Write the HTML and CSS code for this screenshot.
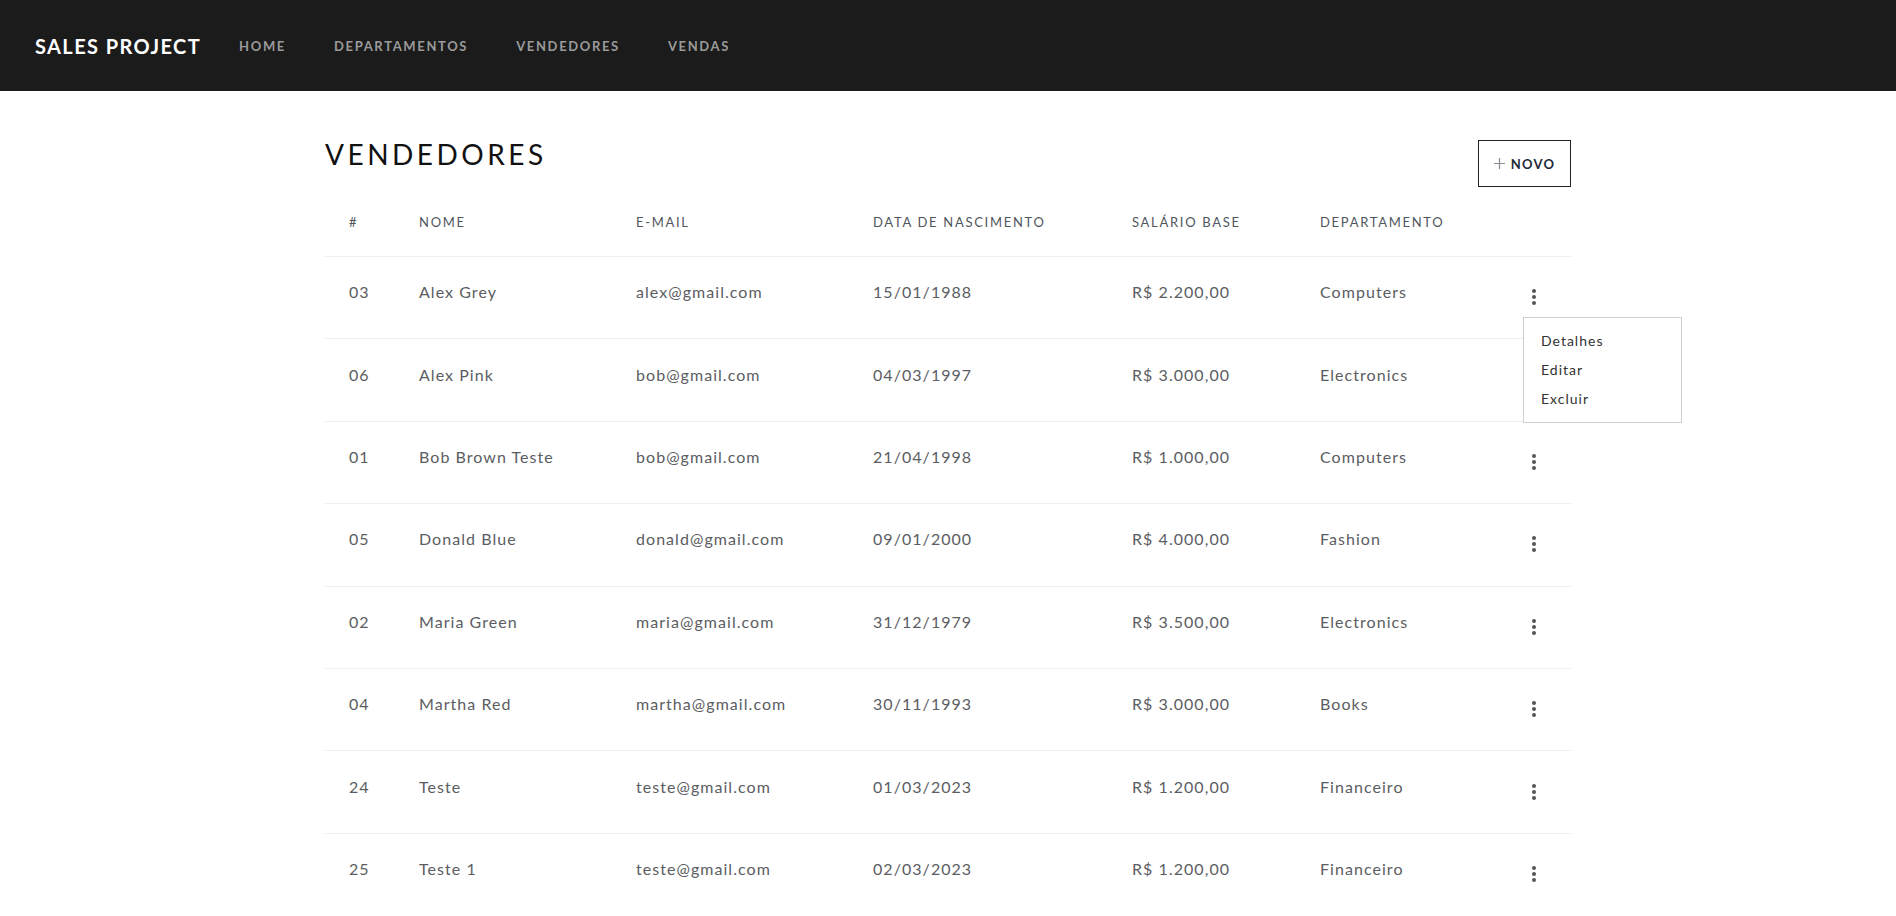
FILE: index.html
```html
<!DOCTYPE html>
<html lang="pt">
<head>
<meta charset="utf-8">
<title>Vendedores</title>
<link rel="stylesheet" href="styles.css">
</head>
<body>
<nav class="navbar">
  <span class="brand">SALES PROJECT</span>
  <a class="nav-link" href="#">HOME</a>
  <a class="nav-link" href="#">DEPARTAMENTOS</a>
  <a class="nav-link" href="#">VENDEDORES</a>
  <a class="nav-link" href="#">VENDAS</a>
</nav>
<main class="container">
  <div class="title-row">
    <h1 class="title">VENDEDORES</h1>
    <button class="btn-novo"><svg class="plus" width="11" height="11" viewBox="0 0 11 11"><path d="M5.5 0V11M0 5.5H11" stroke="#8a8a90" stroke-width="1.2" fill="none"/></svg><span>NOVO</span></button>
  </div>
  <table class="table">
    <colgroup>
      <col class="w1"><col class="w2"><col class="w3"><col class="w4"><col class="w5"><col class="w6"><col class="w7">
    </colgroup>
    <thead>
      <tr><th>#</th><th>NOME</th><th>E-MAIL</th><th>DATA DE NASCIMENTO</th><th>SALÁRIO BASE</th><th>DEPARTAMENTO</th><th></th></tr>
    </thead>
    <tbody>
      <tr><td>03</td><td>Alex Grey</td><td>alex@gmail.com</td><td>15/01/1988</td><td>R$ 2.200,00</td><td>Computers</td>
        <td class="act"><span class="dots"><i></i><i></i><i></i></span>
          <div class="menu"><a href="#">Detalhes</a><a href="#">Editar</a><a href="#">Excluir</a></div></td></tr>
      <tr><td>06</td><td>Alex Pink</td><td>bob@gmail.com</td><td>04/03/1997</td><td>R$ 3.000,00</td><td>Electronics</td><td class="act"></td></tr>
      <tr><td>01</td><td>Bob Brown Teste</td><td>bob@gmail.com</td><td>21/04/1998</td><td>R$ 1.000,00</td><td>Computers</td><td class="act"><span class="dots"><i></i><i></i><i></i></span></td></tr>
      <tr><td>05</td><td>Donald Blue</td><td>donald@gmail.com</td><td>09/01/2000</td><td>R$ 4.000,00</td><td>Fashion</td><td class="act"><span class="dots"><i></i><i></i><i></i></span></td></tr>
      <tr><td>02</td><td>Maria Green</td><td>maria@gmail.com</td><td>31/12/1979</td><td>R$ 3.500,00</td><td>Electronics</td><td class="act"><span class="dots"><i></i><i></i><i></i></span></td></tr>
      <tr><td>04</td><td>Martha Red</td><td>martha@gmail.com</td><td>30/11/1993</td><td>R$ 3.000,00</td><td>Books</td><td class="act"><span class="dots"><i></i><i></i><i></i></span></td></tr>
      <tr><td>24</td><td>Teste</td><td>teste@gmail.com</td><td>01/03/2023</td><td>R$ 1.200,00</td><td>Financeiro</td><td class="act"><span class="dots"><i></i><i></i><i></i></span></td></tr>
      <tr class="last"><td>25</td><td>Teste 1</td><td>teste@gmail.com</td><td>02/03/2023</td><td>R$ 1.200,00</td><td>Financeiro</td><td class="act"><span class="dots"><i></i><i></i><i></i></span></td></tr>
    </tbody>
  </table>
</main>
</body>
</html>
```
FILE: styles.css
```css
html, body {
  margin: 0;
  padding: 0;
  background: #fff;
  font-family: Lato, "Open Sans", Arial, sans-serif;
  overflow: hidden;
}
.navbar {
  height: 91px;
  background: #1b1b1b;
  display: flex;
  align-items: center;
  padding: 0 35px;
  box-sizing: border-box;
}
.brand {
  color: #fff;
  font-size: 20px;
  font-weight: 700;
  letter-spacing: 1.4px;
  margin-right: 14px;
}
.nav-link {
  color: #9a9a9a;
  text-decoration: none;
  font-size: 13px;
  font-weight: 700;
  letter-spacing: 1.65px;
  padding: 0 24px;
}
.container {
  width: 1246px;
  margin: 0 auto;
  padding-top: 49px;
}
.title-row {
  display: flex;
  justify-content: space-between;
  align-items: flex-start;
  height: 47px;
}
.title {
  margin: 0;
  font-size: 28px;
  line-height: 28px;
  font-weight: 400;
  letter-spacing: 3.5px;
  color: #111;
}
.btn-novo {
  height: 47px;
  width: 93px;
  border: 1px solid #222;
  background: #fff;
  display: flex;
  align-items: center;
  justify-content: center;
  gap: 6px;
  font-family: inherit;
  font-size: 13px;
  font-weight: 700;
  letter-spacing: 1.3px;
  color: #1d2a38;
  padding: 0;
}
.table {
  width: 1246px;
  border-collapse: collapse;
  table-layout: fixed;
}
.w1 { width: 70px; }
.w2 { width: 217px; }
.w3 { width: 237px; }
.w4 { width: 259px; }
.w5 { width: 188px; }
.w6 { width: 213px; }
.w7 { width: 62px; }
.table th {
  height: 69px;
  padding: 0 0 0 24px;
  text-align: left;
  vertical-align: middle;
  font-size: 13px;
  font-weight: 400;
  letter-spacing: 1.7px;
  color: #50565e;
  border-bottom: 1px solid #eeeeee;
}
.table td {
  height: 82.4px;
  padding: 0 0 12px 24px;
  box-sizing: border-box;
  vertical-align: middle;
  font-size: 16px;
  letter-spacing: 1.05px;
  color: #5b5d62;
  border-bottom: 1px solid #eeeeee;
  white-space: nowrap;
}
.table tr.last td { border-bottom: none; }
.table td.act {
  padding: 0 0 5px 23px;
  position: relative;
}
.dots {
  display: inline-flex;
  flex-direction: column;
  gap: 2px;
  vertical-align: middle;
}
.dots i {
  display: block;
  width: 4px;
  height: 4px;
  border-radius: 50%;
  background: #555;
}
.menu {
  position: absolute;
  left: 14px;
  top: 60px;
  width: 159px;
  box-sizing: border-box;
  background: #fff;
  border: 1px solid #cfcfcf;
  padding: 8px 0 9px 17px;
  display: flex;
  flex-direction: column;
  z-index: 2;
}
.menu a {
  line-height: 29px;
  font-size: 14px;
  letter-spacing: 1px;
  color: #333;
  text-decoration: none;
}
```
